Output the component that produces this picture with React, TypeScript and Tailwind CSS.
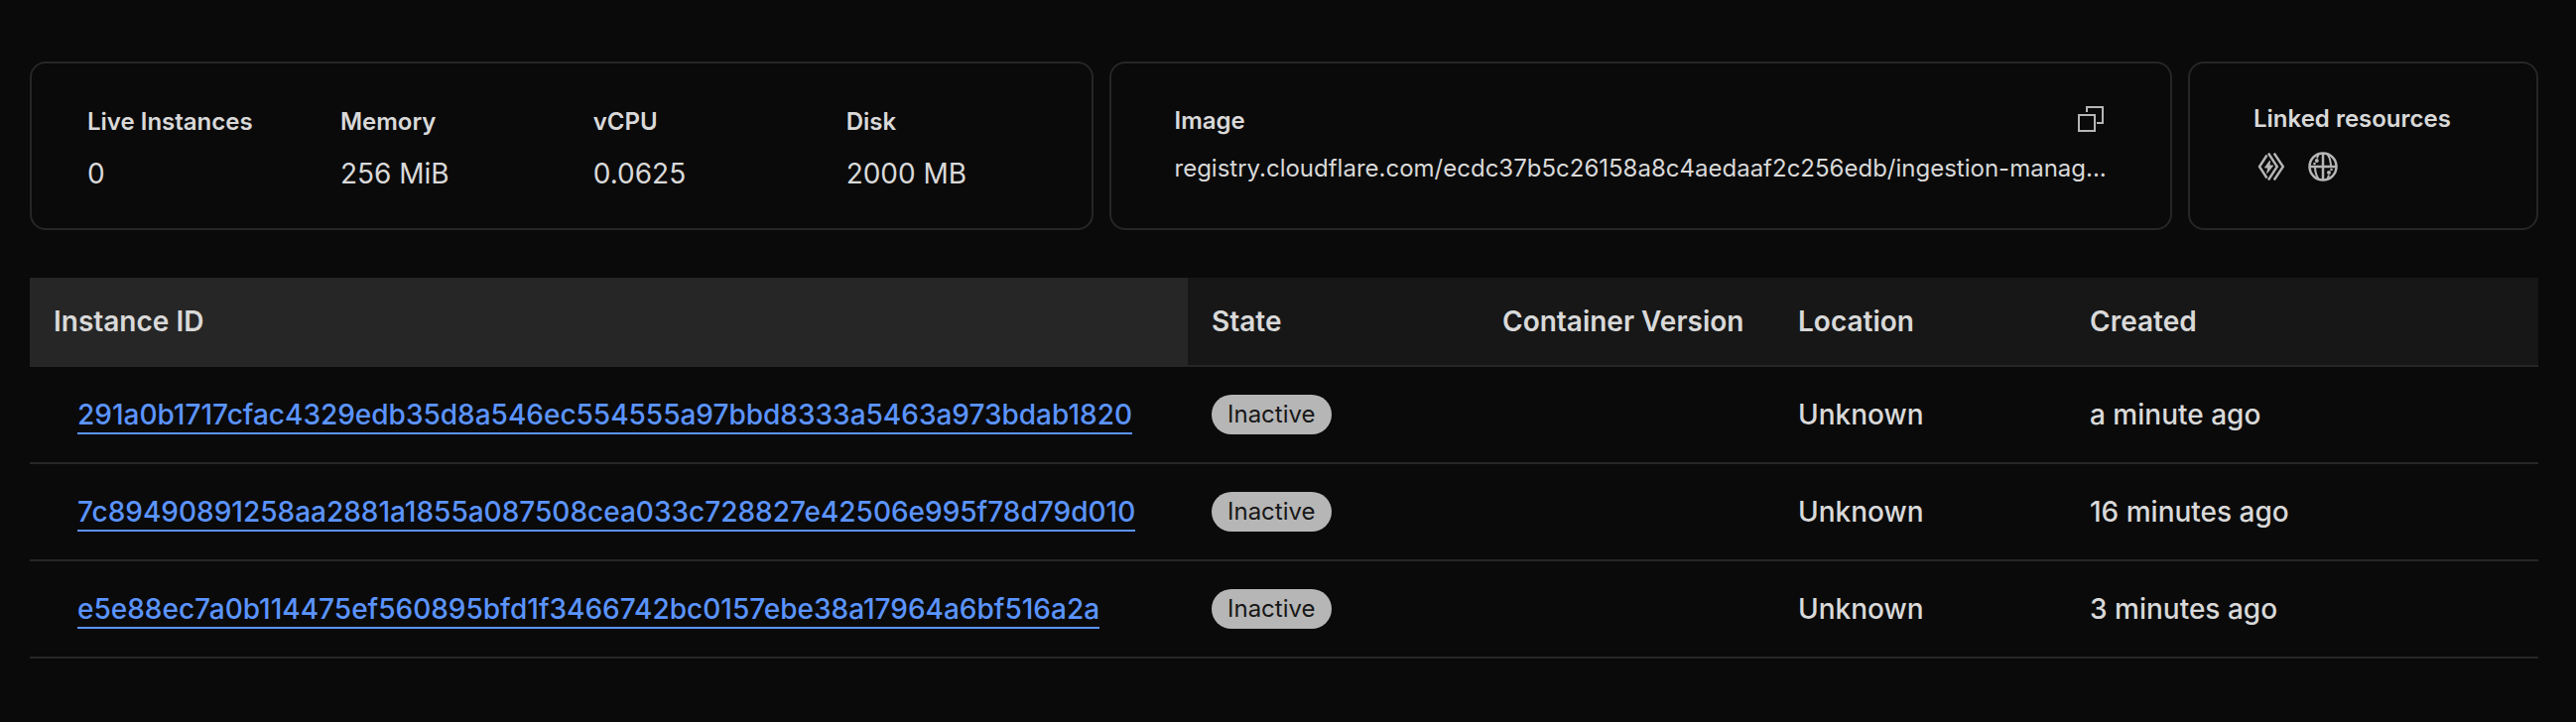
interface Stat {
  label: string;
  value: string;
}

interface Instance {
  id: string;
  state: string;
  version: string;
  location: string;
  created: string;
}

const stats: Stat[] = [
  { label: 'Live Instances', value: '0' },
  { label: 'Memory', value: '256 MiB' },
  { label: 'vCPU', value: '0.0625' },
  { label: 'Disk', value: '2000 MB' },
];

const image = 'registry.cloudflare.com/ecdc37b5c26158a8c4aedaaf2c256edb/ingestion-manag...';

const instances: Instance[] = [
  {
    id: '291a0b1717cfac4329edb35d8a546ec554555a97bbd8333a5463a973bdab1820',
    state: 'Inactive',
    version: '',
    location: 'Unknown',
    created: 'a minute ago',
  },
  {
    id: '7c89490891258aa2881a1855a087508cea033c728827e42506e995f78d79d010',
    state: 'Inactive',
    version: '',
    location: 'Unknown',
    created: '16 minutes ago',
  },
  {
    id: 'e5e88ec7a0b114475ef560895bfd1f3466742bc0157ebe38a17964a6bf516a2a',
    state: 'Inactive',
    version: '',
    location: 'Unknown',
    created: '3 minutes ago',
  },
];

function CopyIcon() {
  return (
    <svg width="26" height="26" viewBox="0 0 26 26" fill="none" stroke="currentColor" strokeWidth="2">
      <rect x="1" y="9" width="16" height="16" />
      <path d="M9 6V1h16v16h-6" />
    </svg>
  );
}

function WorkersIcon() {
  return (
    <svg width="28" height="28" viewBox="0 0 28 28" fill="none" stroke="currentColor" strokeWidth="2.4">
      <path d="M9.500 2.500 2 14l7.500 11.500" />
      <path d="M11 .5 19.800 14 11 27.500" />
      <path d="M16.800.5 25.800 14l-9 13.500" />
      <path
        d="M12.500 8 7.500 15h3.200l-1 5.500 6-7.500H12z"
        fill="currentColor"
        strokeWidth="1"
        strokeLinejoin="round"
      />
    </svg>
  );
}

function GlobeIcon() {
  return (
    <svg width="30" height="30" viewBox="0 0 30 30" fill="none" stroke="currentColor" strokeWidth="2.5">
      <circle cx="15" cy="15" r="13.500" />
      <path d="M1.500 15h27M15 1.500v27" />
      <path d="M10.500 2.500 9 6.500M7 14.500c0 5.500 1 9.500 3.500 13" strokeWidth="2" />
      <path d="M19.500 2.500C22 6 23 10 23 15.500M21 23.500l-1.500 4" strokeWidth="2" />
      <g fill="currentColor" stroke="none">
        <circle cx="8.800" cy="9" r="2" />
        <circle cx="6.500" cy="12" r="1.300" />
        <circle cx="21" cy="21" r="2" />
        <circle cx="23.500" cy="18" r="1.300" />
      </g>
    </svg>
  );
}

export default function App() {
  return (
    <main className="min-h-screen bg-[#0a0a0a] pt-[62px] pr-[38px] pb-16 pl-[30px] font-['Inter',sans-serif] text-[#d9d9d9]">
      {/* Summary cards */}
      <div className="grid grid-cols-[minmax(0,1fr)_minmax(0,1fr)_353px] gap-4">
        <section className="rounded-2xl border-2 border-[#262626] px-14 pt-[41px] pb-[35px]">
          <dl className="grid grid-cols-4 gap-16">
            {stats.map(stat => (
              <div key={stat.label} className="whitespace-nowrap">
                <dt className="text-2xl/9 font-semibold">{stat.label}</dt>
                <dd className="mt-3.5 text-[28px]/10">{stat.value}</dd>
              </div>
            ))}
          </dl>
        </section>

        <section className="rounded-2xl border-2 border-[#262626] px-16 pt-10 pb-9">
          <div className="flex items-start justify-between">
            <h2 className="text-2xl/9 font-semibold">Image</h2>
            <button type="button" aria-label="Copy image" className="p-[3px] text-[#b6b6b6]">
              <CopyIcon />
            </button>
          </div>
          <p className="mt-3 text-2xl/9 whitespace-nowrap">{image}</p>
        </section>

        <section className="rounded-2xl border-2 border-[#262626] px-16 pt-[38px] pb-9">
          <h2 className="text-2xl/9 font-semibold whitespace-nowrap">Linked resources</h2>
          <div className="mt-3 flex gap-4 text-[#b6b6b6]">
            <a href="#worker" aria-label="Worker" className="flex size-9 items-center justify-center">
              <WorkersIcon />
            </a>
            <a href="#domain" aria-label="Domain" className="flex size-9 items-center justify-center">
              <GlobeIcon />
            </a>
          </div>
        </section>
      </div>

      {/* Instances */}
      <table className="mt-12 w-full table-fixed border-separate border-spacing-0 text-left text-[28px]/8 font-medium">
        <colgroup>
          <col className="w-[1167px]" />
          <col className="w-[293px]" />
          <col className="w-[298px]" />
          <col className="w-[294px]" />
          <col />
        </colgroup>
        <thead>
          <tr className="h-[90px] bg-[#171717] whitespace-nowrap *:border-b-2 *:border-[#262626] *:px-6 *:font-semibold">
            <th className="bg-[#262626]">Instance ID</th>
            <th>State</th>
            <th>Container Version</th>
            <th>Location</th>
            <th>Created</th>
          </tr>
        </thead>
        <tbody>
          {instances.map(instance => (
            <tr key={instance.id} className="h-[98px] *:border-b-2 *:border-[#262626]">
              <td className="pl-12">
                <a href={`#${instance.id}`} className="border-b-2 border-[#5b94ff] pb-px text-[#5b94ff]">
                  {instance.id}
                </a>
              </td>
              <td className="px-6">
                <span className="flex h-10 w-fit items-center rounded-full bg-[#b6b6b6] px-4 text-2xl font-normal text-[#171717]">
                  {instance.state}
                </span>
              </td>
              <td className="px-6">{instance.version}</td>
              <td className="px-6">{instance.location}</td>
              <td className="px-6">{instance.created}</td>
            </tr>
          ))}
        </tbody>
      </table>
    </main>
  );
}
